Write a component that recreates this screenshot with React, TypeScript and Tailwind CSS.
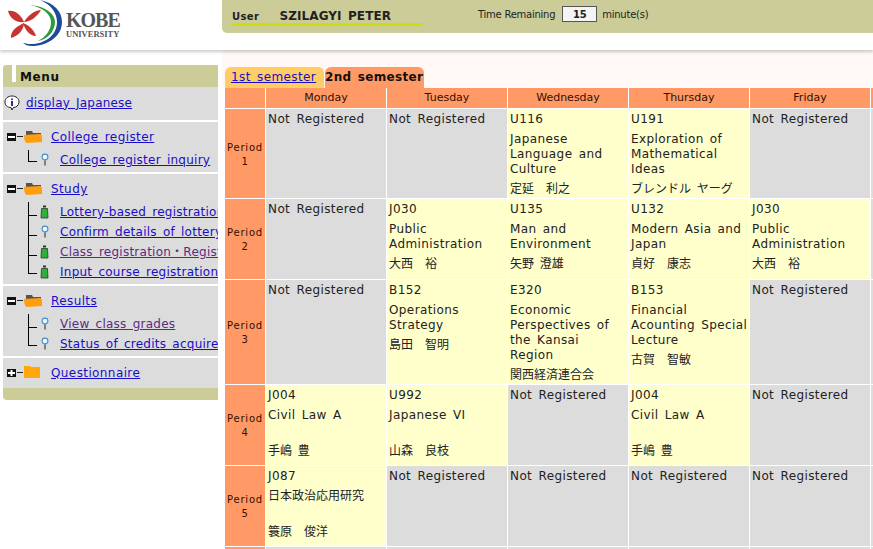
import React from 'react';

const cjk = '"DejaVu Sans", "Noto Sans CJK JP", sans-serif';

const Logo = () => (
  <svg width="62" height="46" viewBox="0 0 62 46" className="shrink-0">
    <path d="M40 0 C55 3 62 12 62 22 C62 36 48 46 32 46 C28 46 25 45 23 43 C27 44 30 44 33 44 C47 43 57 34 57 22 C57 12 50 4 40 0 Z" fill="#1f4a9c" />
    <path d="M30 5 C44 6 55 13 55 22 C55 32 46 40 38 41 C46 37 51 30 51 22 C51 14 42 7 30 5 Z" fill="#2e9a3e" />
    <path d="M8 11 C15 10 21 15 24 22 C17 23 10 19 8 11 Z" fill="#c8342f" />
    <path d="M41 10 C35 10 28 15 24 22 C30 22 37 17 41 10 Z" fill="#c8342f" />
    <path d="M11 38 C10 31 17 26 24 23 C24 30 18 36 11 38 Z" fill="#c8342f" />
    <path d="M36 36 C30 36 25 30 23 23 C29 25 34 30 36 36 Z" fill="#c8342f" />
  </svg>
);

const Minus = ({ plus }: { plus?: boolean }) => (
  <svg width="18" height="10" viewBox="0 0 18 10" className="shrink-0">
    <rect x="0" y="1" width="9" height="8" fill="#111" />
    <rect x="1" y="4" width="7" height="2" fill="#fff" />
    {plus && <rect x="3.5" y="2" width="2" height="6" fill="#fff" />}
    <rect x="10" y="4" width="6" height="1" fill="#222" />
  </svg>
);

const Folder = ({ open = true }: { open?: boolean }) => (
  <svg width="18" height="14" viewBox="0 0 18 14" className="shrink-0">
    {open ? (
      <>
        <path d="M2 2 L2 1 L8 1 L9 3 L17 3 L17 8 L2 8 Z" fill="#5e5245" />
        <path d="M0 5 L16 4 C18 4 18 6 18 8 L18 12 L3 13 C1 13 0 9 0 5 Z" fill="#ff9f0f" />
      </>
    ) : (
      <path d="M0 0 L6 0 L7 1 L16 1 L16 12 L0 12 Z" fill="#ffa70f" />
    )}
  </svg>
);

const PinIcon = () => (
  <svg width="10" height="14" viewBox="0 0 10 14" className="shrink-0">
    <circle cx="5" cy="4" r="2.9" fill="#eef6ff" stroke="#3f8fd0" strokeWidth="1.1" />
    <rect x="4.5" y="7.5" width="1" height="5" fill="#222" />
  </svg>
);

const BatteryIcon = () => (
  <svg width="10" height="14" viewBox="0 0 10 14" className="shrink-0">
    <rect x="3" y="0.5" width="3" height="2" fill="#333" />
    <path d="M1.5 3.5 L7.5 3.5 L8 13 L1 13 Z" fill="#2fae38" stroke="#2b3a2b" strokeWidth="0.8" />
  </svg>
);

const InfoIcon = () => (
  <svg width="16" height="16" viewBox="0 0 16 16" className="shrink-0">
    <path d="M8 1 C12 1 15 3.500 15 7 C15 10.500 12 12.500 9.500 12.500 L8 15 L7 12.500 C3.500 12.500 1 10.500 1 7 C1 3.500 4 1 8 1 Z" fill="#fff" stroke="#222" strokeWidth="1" />
    <circle cx="8" cy="4.200" r="1" fill="#2a2ab0" />
    <rect x="7" y="6" width="2" height="5" fill="#2a2ab0" />
  </svg>
);

const Branch = ({ last }: { last?: boolean }) => (
  <span className={`shrink-0 w-[9px] border-l border-black relative ${last ? 'h-[12px] self-start' : 'self-stretch'}`}>
    <span className={`absolute left-0 w-[8px] border-t border-black ${last ? 'bottom-0' : 'top-[13px]'}`} />
  </span>
);

type MenuLeaf = { label: string; icon: 'pin' | 'battery'; visited?: boolean };

const MenuGroup = ({ title, items, closed }: { title: string; items?: MenuLeaf[]; closed?: boolean }) => (
  <div className="bg-[#dcdcdc] pl-[4px] pt-[5px] overflow-hidden">
    <div className="flex items-center h-[20px]">
      <Minus plus={closed} />
      <span className="-ml-[1px]"><Folder open={!closed} /></span>
      <a className="ml-[9px] text-[#1a0dc8] underline whitespace-nowrap">{title}</a>
    </div>
    {items && (
      <div className="ml-[21px] mt-[3px] pb-[2px]">
        {items.map((it, i) => (
          <div key={it.label} className="flex items-center h-[20px]">
            <Branch last={i === items.length - 1} />
            <span className="w-[10px] flex justify-center ml-[3px]">
              {it.icon === 'pin' ? <PinIcon /> : <BatteryIcon />}
            </span>
            <a className={`ml-[10px] underline whitespace-nowrap tracking-[0.25px] ${it.visited ? 'text-[#5c2a86]' : 'text-[#1a0dc8]'}`}>{it.label}</a>
          </div>
        ))}
      </div>
    )}
  </div>
);

type Course = { code: string; title: string[]; teacher: string; spacer?: boolean; jpTitle?: boolean };
const NR = null;

const rows: { h: string; cells: (Course | null)[] }[] = [
  {
    h: 'h-[89px]',
    cells: [
      NR,
      NR,
      { code: 'U116', title: ['Japanese', 'Language and', 'Culture'], teacher: '定延　利之' },
      { code: 'U191', title: ['Exploration of', 'Mathematical', 'Ideas'], teacher: 'ブレンドル ヤーグ' },
      NR,
    ],
  },
  {
    h: 'h-[80px]',
    cells: [
      NR,
      { code: 'J030', title: ['Public', 'Administration'], teacher: '大西　裕' },
      { code: 'U135', title: ['Man and', 'Environment'], teacher: '矢野 澄雄' },
      { code: 'U132', title: ['Modern Asia and', 'Japan'], teacher: '貞好　康志' },
      { code: 'J030', title: ['Public', 'Administration'], teacher: '大西　裕' },
    ],
  },
  {
    h: 'h-[104px]',
    cells: [
      NR,
      { code: 'B152', title: ['Operations', 'Strategy'], teacher: '島田　智明' },
      { code: 'E320', title: ['Economic', 'Perspectives of', 'the Kansai', 'Region'], teacher: '関西経済連合会' },
      { code: 'B153', title: ['Financial', 'Acounting Special', 'Lecture'], teacher: '古賀　智敏' },
      NR,
    ],
  },
  {
    h: 'h-[80px]',
    cells: [
      { code: 'J004', title: ['Civil Law A'], teacher: '手嶋 豊', spacer: true },
      { code: 'U992', title: ['Japanese VI'], teacher: '山森　良枝', spacer: true },
      NR,
      { code: 'J004', title: ['Civil Law A'], teacher: '手嶋 豊', spacer: true },
      NR,
    ],
  },
  {
    h: 'h-[80px]',
    cells: [
      { code: 'J087', title: ['日本政治応用研究'], teacher: '簑原　俊洋', spacer: true, jpTitle: true },
      NR,
      NR,
      NR,
      NR,
    ],
  },
];

const Cell = ({ c, h }: { c: Course | null; h: string }) => {
  if (!c) return <div className={`${h} bg-[#dcdcdc] pl-[2px] pt-[3px] leading-[15px] text-[#222]`}>Not Registered</div>;
  return (
    <div className={`${h} bg-[#ffffcc] pl-[2px] pt-[3px] leading-[15px] text-[#222] flex flex-col`}>
      <div>{c.code}</div>
      <div className={`mt-[5px] ${c.jpTitle ? 'tracking-normal' : ''}`}>
        {c.title.map(t => <div key={t} className="whitespace-nowrap">{t}</div>)}
      </div>
      {c.spacer && <div className="h-[11px] mt-[5px]" />}
      <div className="mt-[5px] tracking-normal whitespace-nowrap text-[12px]">{c.teacher}</div>
    </div>
  );
};

export default function App() {
  return (
    <div className="w-[873px] h-[549px] overflow-hidden bg-white text-[12px] tracking-[0.4px] [word-spacing:2px] text-[#222]" style={{ fontFamily: cjk }}>
      <header className="h-[50px] flex shadow-[0_2px_3px_rgba(0,0,0,0.2)] relative z-10 bg-white">
        <div className="w-[222px] flex items-start shrink-0">
          <Logo />
          <div className="ml-[4px] mt-[10px] text-[#555] font-bold leading-none" style={{ fontFamily: '"Liberation Serif", serif', letterSpacing: 0, wordSpacing: 0 }}>
            <div className="text-[20px] tracking-[-1px]">KOBE</div>
            <div className="text-[8.5px] mt-0">UNIVERSITY</div>
          </div>
        </div>
        <div className="flex-1 h-[33px] bg-[#cccc99] rounded-bl-[5px] flex items-start pl-[10px]">
          <div className="w-[190px] h-[26px] border-b-[3px] border-[#ccdd11] flex items-center">
            <span className="font-bold text-[10px] text-[#222] mt-[10px]">User</span>
            <span className="font-bold text-[12px] tracking-[0.1px] text-[#222] ml-[20px] mt-[9px]">SZILAGYI PETER</span>
          </div>
          <div className="flex items-center h-[16px] mt-[6px] ml-[56px] text-[10px] tracking-[-0.25px] [word-spacing:0px] text-[#222]">
            <span>Time Remaining</span>
            <span className="ml-[7px] w-[35px] h-[16px] bg-[#f4f4f4] border border-[#555] flex items-center justify-center font-bold text-[10px]">15</span>
            <span className="ml-[5px]">minute(s)</span>
          </div>
        </div>
      </header>

      <div className="flex">
        <aside className="w-[215px] ml-[3px] mt-[15px] shrink-0 h-[335px] flex flex-col gap-[2px] overflow-hidden text-[12px]">
          <div>
            <div className="h-[22px] bg-[#cccc99] rounded-tl-[3px] flex">
              <span className="ml-[9px] w-[4px] h-[17px] bg-white" />
              <span className="ml-[4px] mt-[1px] font-bold text-[12px] tracking-[0.6px] text-[#111] leading-[22px]">Menu</span>
            </div>
            <div className="bg-[#dcdcdc] h-[33px] flex items-center pl-[1px] pb-[2px]">
              <InfoIcon />
              <a className="ml-[6px] text-[#1a0dc8] underline tracking-[0.2px]">display Japanese</a>
            </div>
          </div>
          <MenuGroup title="College register" items={[{ label: 'College register inquiry', icon: 'pin' }]} />
          <MenuGroup
            title="Study"
            items={[
              { label: 'Lottery-based registration', icon: 'battery' },
              { label: 'Confirm details of lottery', icon: 'pin' },
              { label: 'Class registration・Registration', icon: 'battery', visited: true },
              { label: 'Input course registration', icon: 'battery' },
            ]}
          />
          <MenuGroup
            title="Results"
            items={[
              { label: 'View class grades', icon: 'pin', visited: true },
              { label: 'Status of credits acquired', icon: 'pin' },
            ]}
          />
          <div>
            <div className="bg-[#dcdcdc] h-[30px] pl-[4px] pt-[5px] flex items-start">
              <div className="flex items-center h-[20px]">
                <Minus plus />
                <span className="-ml-[1px]"><Folder open={false} /></span>
                <a className="ml-[9px] text-[#1a0dc8] underline">Questionnaire</a>
              </div>
            </div>
            <div className="h-[12px] bg-[#cccc99] rounded-bl-[4px]" />
          </div>
        </aside>

        <main className="flex-1 ml-[4px] min-w-0 overflow-hidden">
          <div className="bg-[#fff8f5] pl-[3px] h-[38px] flex items-end">
            <div className="h-[21px] w-[99px] rounded-t-[6px] bg-[#ffcc66] pl-[6px] leading-[21px]">
              <a className="text-[#1a0dc8] underline whitespace-nowrap">1st semester</a>
            </div>
            <div className="h-[21px] w-[99px] ml-[1px] rounded-t-[6px] bg-[#ff9966] font-bold text-[12px] tracking-[0.3px] text-[#111] leading-[21px] whitespace-nowrap overflow-hidden">2nd semester</div>
          </div>
          <div className="ml-[3px] grid grid-cols-[40px_120px_120px_120px_120px_120px_10px] gap-px">
            <div className="h-[20px] bg-[#ff9966]" />
            {['Monday', 'Tuesday', 'Wednesday', 'Thursday', 'Friday'].map(d => (
              <div key={d} className="h-[20px] bg-[#ff9966] text-center text-[11px] tracking-normal leading-[19px] text-[#331100]">{d}</div>
            ))}
            <div className="h-[20px] bg-[#ff9966]" />
            {rows.map((r, i) => (
              <React.Fragment key={i}>
                <div className={`${r.h} bg-[#ff9966] pt-[2px] flex flex-col items-center justify-center text-[10px] tracking-[0.8px] leading-[14px] text-[#331100]`}>
                  <span>Period</span>
                  <span>{i + 1}</span>
                </div>
                {r.cells.map((c, j) => <Cell key={j} c={c} h={r.h} />)}
                <div className={`${r.h} bg-[#dcdcdc]`} />
              </React.Fragment>
            ))}
            <div className="h-[4px] bg-[#ff9966]" />
            {[0, 1, 2, 3, 4, 5].map(k => <div key={k} className="h-[4px] bg-[#dcdcdc]" />)}
          </div>
        </main>
      </div>
    </div>
  );
}
